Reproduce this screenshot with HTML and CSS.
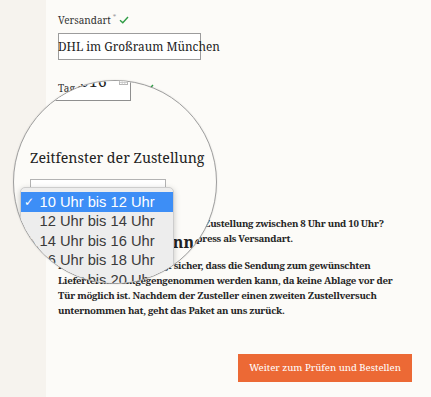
FILE: index.html
```html
<!DOCTYPE html>
<html lang="de">
<head>
<meta charset="utf-8">
<title>Versand</title>
<link rel="stylesheet" href="styles.css">
</head>
<body>
<div class="page">
  <aside class="sidebar"></aside>
  <main class="main">
    <div class="field">
      <div class="label">Versandart<span class="req">*</span><svg class="ok" viewBox="0 0 10 8" width="10" height="8"><path d="M1 4.2 L3.8 6.8 L9 1" fill="none" stroke="#2f9c45" stroke-width="1.4"/></svg></div>
      <div class="box">DHL im Großraum München</div>
    </div>
    <div class="field field-date">
      <div class="label">Tag der Lieferung<svg class="ok ok-gap" viewBox="0 0 10 8" width="10" height="8"><path d="M1 4.2 L3.8 6.8 L9 1" fill="none" stroke="#2f9c45" stroke-width="1.4"/></svg></div>
    </div>
    <p class="text text-first">Sie wünschen sich eine frühere Zustellung zwischen 8 Uhr und 10 Uhr? Dann wählen Sie bitte DHL Express als Versandart.</p>
    <p class="text">Der Empfänger bestätigt sicher, dass die Sendung zum gewünschten Liefertermin entgegengenommen werden kann, da keine Ablage vor der Tür möglich ist. Nachdem der Zusteller einen zweiten Zustellversuch unternommen hat, geht das Paket an uns zurück.</p>
    <div class="actions">
      <button class="btn">Weiter zum Prüfen und Bestellen</button>
    </div>
  </main>

  <div class="magnifier">
    <div class="mag-col">
      <div class="mag-date">21.6.2016
        <svg class="cal" viewBox="0 0 9 7" width="9" height="7"><rect x="0.5" y="0.5" width="8" height="6" fill="none" stroke="#b5b5b5"/><path d="M0.5 2.5H8.5M3.2 2.5V6.5M5.8 2.5V6.5M0.5 4.5H8.5" stroke="#c4c4c4" stroke-width="0.8"/></svg>
      </div>
      <div class="mag-label">Zeitfenster der Zustellung</div>
      <div class="mag-select"></div>
      <div class="mag-heading">Bitte persönlich annehmen</div>
    </div>
    <div class="menu">
      <div class="opt opt-on"><span class="tick">✓</span><span>10 Uhr bis 12 Uhr</span></div>
      <div class="opt"><span class="tick"></span><span>12 Uhr bis 14 Uhr</span></div>
      <div class="opt"><span class="tick"></span><span>14 Uhr bis 16 Uhr</span></div>
      <div class="opt"><span class="tick"></span><span>16 Uhr bis 18 Uhr</span></div>
      <div class="opt"><span class="tick"></span><span>18 Uhr bis 20 Uhr</span></div>
    </div>
  </div>
</div>
</body>
</html>
```
FILE: styles.css
```css
* { box-sizing: border-box; }
html, body { margin: 0; padding: 0; }
body {
  background: #fcfbf8;
  font-family: "Noto Serif", "DejaVu Serif", serif;
  color: #2a2a2a;
  width: 431px;
  height: 397px;
  overflow: hidden;
}
.page {
  position: relative;
  display: flex;
  height: 397px;
}
.sidebar {
  width: 46px;
  flex: none;
  background: #f6f3ee;
}
.main {
  width: 366px;
  padding: 13px 0 0 12px;
}
.label {
  font-size: 10px;
  line-height: 14px;
  color: #333;
  display: flex;
  align-items: center;
  white-space: nowrap;
}
.req {
  color: #9a9a9a;
  font-size: 7px;
  margin: -5px 3px 0 2px;
}
.ok { display: block; }
.ok-gap { margin-left: 1px; }
.box {
  margin-top: 6px;
  width: 143px;
  height: 27px;
  border: 1px solid #9c9c9c;
  background: #fff;
  font-size: 11.8px;
  line-height: 25px;
  color: #222;
  white-space: nowrap;
  text-indent: -1px;
}
.field-date { margin-top: 21px; }
.text {
  margin: 0;
  width: 350px;
  font-size: 9.7px;
  line-height: 15px;
  font-weight: 700;
  letter-spacing: -0.3px;
  color: #262626;
}
.text-first { margin-top: 120.6px; margin-bottom: 12px; }
.actions {
  display: flex;
  justify-content: flex-end;
  margin-top: 36.4px;
}
.btn {
  width: 174px;
  height: 28px;
  border: 0;
  border-radius: 0;
  background: #ec6935;
  color: #fff;
  font-family: "Noto Serif", "DejaVu Serif", serif;
  font-size: 9.6px;
  padding: 0;
}

/* magnifier overlay */
.magnifier {
  position: absolute;
  left: 13px;
  top: 80px;
  width: 204px;
  height: 204px;
  border-radius: 50%;
  overflow: hidden;
  border: 1px solid #9f9f9f;
  background: #fcfbf8;
  box-shadow: 0 0 2px rgba(0,0,0,0.12);
}
.mag-col {
  position: absolute;
  left: 16px;
  top: -21px;
  width: 150px;
}
.mag-date {
  position: relative;
  width: 101px;
  height: 41px;
  border: 1.5px solid #8f8f8f;
  background: #fff;
  font-size: 16px;
  line-height: 20px;
  padding: 10.3px 0 0 5px;
  color: #222;
}
.cal {
  position: absolute;
  right: 2px;
  top: 17px;
}
.mag-label {
  margin-top: 48px;
  font-size: 14.2px;
  line-height: 18px;
  color: #222;
  white-space: nowrap;
}
.mag-select {
  margin-top: 11.8px;
  width: 136px;
  height: 30px;
  border: 1px solid #b3b3b3;
  background: #fff;
}
.mag-heading {
  margin-top: 23.3px;
  font-size: 16px;
  line-height: 20px;
  font-weight: 700;
  white-space: nowrap;
  color: #222;
}
.menu {
  position: absolute;
  left: 6px;
  top: 106px;
  width: 154px;
  padding-top: 4px;
  padding-bottom: 6px;
  background: #ededed;
  border: 0.5px solid #cdcdcd;
  border-radius: 5px;
  box-shadow: 0 2px 6px rgba(0,0,0,0.22);
  font-family: "Liberation Sans", Arial, sans-serif;
}
.opt {
  display: grid;
  grid-template-columns: 18.5px auto;
  align-items: center;
  height: 19.5px;
  font-size: 14.7px;
  color: #3a3a3a;
  white-space: nowrap;
}
.opt-on {
  background: #3d8ef6;
  color: #fff;
}
.tick {
  font-family: "DejaVu Sans", sans-serif;
  font-size: 12px;
  padding-left: 3px;
}
```
